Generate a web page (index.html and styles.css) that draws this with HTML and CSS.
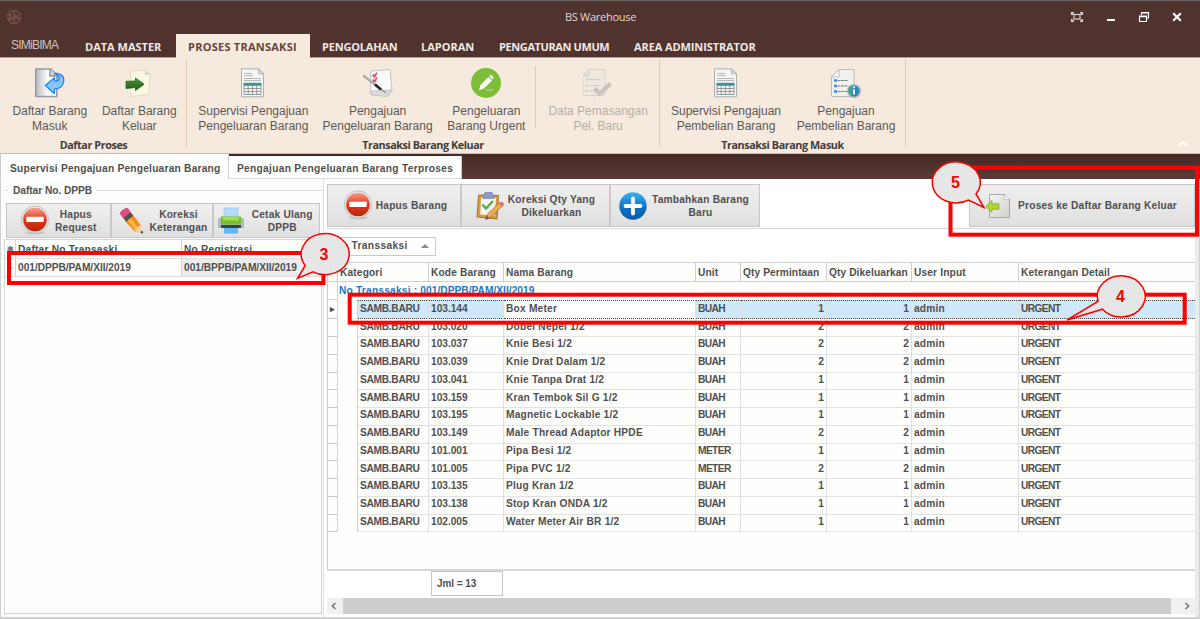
FILE: index.html
```html
<!DOCTYPE html>
<html lang="id">
<head>
<meta charset="utf-8">
<title>BS Warehouse</title>
<link rel="stylesheet" href="styles.css">
</head>
<body>
<svg class="defs" width="0" height="0">
  <defs>
    <linearGradient id="paper" x1="0" y1="0" x2="1" y2="1"><stop offset="0" stop-color="#f4f4f3"/><stop offset="1" stop-color="#cfcfcd"/></linearGradient>
    <linearGradient id="steel" x1="0" y1="0" x2="1" y2="0"><stop offset="0" stop-color="#b9bdc4"/><stop offset=".6" stop-color="#fff"/></linearGradient>
    <linearGradient id="red" x1="0" y1="0" x2="0" y2="1"><stop offset="0" stop-color="#f9a08c"/><stop offset=".5" stop-color="#dd3a1c"/><stop offset="1" stop-color="#ba2408"/></linearGradient>
    <linearGradient id="blue" x1="0" y1="0" x2="0" y2="1"><stop offset="0" stop-color="#3cb4ee"/><stop offset=".55" stop-color="#0b73c4"/><stop offset="1" stop-color="#0a58a4"/></linearGradient>
    <linearGradient id="grn" x1="0" y1="0" x2="0" y2="1"><stop offset="0" stop-color="#4c9a38"/><stop offset="1" stop-color="#1e5c1c"/></linearGradient>
    <symbol id="i-table" viewBox="0 0 30 30">
      <path d="M3.500.8h17l5 5v23h-22z" fill="#f3f4f3" stroke="#aaaead"/>
      <path d="M20.500.8v5h5z" fill="#d5d8d7" stroke="#aaaead" stroke-width=".8"/>
      <path d="M6 5.500h8M6 7.500h9M6 10.500h17M6 12.500h17" stroke="#b4b8b8"/>
      <path d="M6 17.500v9h17v-9M6 20.500h17M6 23.500h17M10.200 17.500v9M14.500 17.500v9M18.700 17.500v9" fill="none" stroke="#8b9292" stroke-width=".9"/>
      <path d="M5.500 14.800h18v3h-18z" fill="#3c9499"/>
    </symbol>
    <symbol id="i-stop" viewBox="0 0 30 32">
      <ellipse cx="15" cy="28.500" rx="10" ry="1.800" fill="#aaa" opacity=".5"/>
      <circle cx="15" cy="15" r="14" fill="#e9e9e9" stroke="#bdbdbd"/>
      <circle cx="15" cy="15" r="12.200" fill="url(#red)"/>
      <rect x="6" y="12" width="18" height="5.600" rx=".8" fill="#fff"/>
    </symbol>
  </defs>
</svg>
<div class="window">
  <header class="titlebar">
    <svg class="logo" width="16" height="16" viewBox="0 0 16 16" fill="none" stroke="#80594f" stroke-width="1.200"><circle cx="8" cy="8" r="6.500" stroke-dasharray="9 1.200"/><path d="M8 1v14M6 5.500H3.500v5H6V8H4.500M10 5.500v5M10 8h2.500v2.500M12.500 5.500v1M8 8h2"/></svg>
    <span class="app-name">BS Warehouse</span>
    <div class="win-btns">
      <svg width="14" height="12" viewBox="0 0 14 12" fill="none" stroke="#d9cfcb" stroke-width="1.200"><rect x="4" y="3.500" width="6" height="4.500"/><path d="M1.500 4V1.500H4M10 1.500h2.500V4M1.500 8v2.500H4M12.500 8v2.500H10M1.500 1.500l2 2M12.500 1.500l-2 2M1.500 10.500l2-2M12.500 10.500l-2-2"/></svg>
      <svg width="10" height="12" viewBox="0 0 10 12"><path d="M1 9h8" stroke="#fff" stroke-width="2"/></svg>
      <svg width="12" height="12" viewBox="0 0 12 12" fill="none" stroke="#fff" stroke-width="1.200"><path d="M3.500 4V1.500h7V7H8.500M3 2h8"/><path d="M1.500 5h7v5.500h-7zM1 5.600h8"/></svg>
      <svg width="10" height="12" viewBox="0 0 10 12"><path d="M1.200 2.200l7.600 7.600M8.800 2.200L1.200 9.800" stroke="#fff" stroke-width="2.200"/></svg>
    </div>
  </header>
  <nav class="menu">
    <span class="m-app">SIMiBIMA</span>
    <span class="m m1">DATA MASTER</span>
    <span class="m m2 active">PROSES TRANSAKSI</span>
    <span class="m m3">PENGOLAHAN</span>
    <span class="m m4">LAPORAN</span>
    <span class="m m5">PENGATURAN UMUM</span>
    <span class="m m6">AREA ADMINISTRATOR</span>
  </nav>
  <section class="ribbon">
    <div class="group g1">
      <div class="btns">
        <div class="rb w89"><svg width="30" height="30" viewBox="0 0 30 30"><path d="M.8 1h15l6 6v21.500H.8z" fill="url(#steel)" stroke="#989ba1" stroke-width="1.600"/><path d="M15 1v7h7" fill="#d8dade" stroke="#8d9097" stroke-width="1.400"/><path d="M19.500 5.500c5-.8 9.500 2 9.300 7-.2 5.200-4 8.300-9.300 8.400l-.3 4.700-8.700-8.200 9-7.700v3.400c2.600.1 4.700-.6 4.500-3.100-.2-2.200-2-3.600-4.500-4.500z" fill="#86c8fc" stroke="#2b84ee" stroke-width="1.400" stroke-linejoin="round"/></svg><span>Daftar Barang<br>Masuk</span></div>
        <div class="rb w89"><svg width="30" height="30" viewBox="0 0 30 30"><path d="M6.500 3l14.500-1 5 4.500-1 20-18 2z" fill="#fbf9e1" stroke="#d9d6bd" stroke-width=".8"/><path d="M21 2l-.3 5 5.300-.5z" fill="#d0d3d0"/><path d="M2 13.300l9.500-.3V10l8.500 6.200-8.500 6.300V19.600l-9.500.8z" fill="url(#grn)" stroke="#215b20" stroke-width=".8"/></svg><span>Daftar Barang<br>Keluar</span></div>
      </div>
      <div class="caption">Daftar Proses</div>
    </div>
    <div class="group g2">
      <div class="btns">
        <div class="rb w125"><svg width="30" height="30"><use href="#i-table"/></svg><span>Supervisi Pengajuan<br>Pengeluaran Barang</span></div>
        <div class="rb w124"><svg width="30" height="30" viewBox="0 0 30 30"><path d="M8 3l19-1.500L29 22l-3 5-19-1z" fill="#fafaf9" stroke="#bbb" stroke-width=".9"/><path d="M8 23l1 4 15 1.500L29 22z" fill="#ddd" stroke="#b5b5b5" stroke-width=".7"/><path d="M10 6h3v3h-3zM10 11h3v3h-3z" fill="#fff" stroke="#dba0a5"/><path d="M10 7l1.500 1.500L14 4.500M10 12l1.500 1.500L14 9.500" fill="none" stroke="#c83645" stroke-width="1.100"/><path d="M.5 7.500L14 18" stroke="#888" stroke-width="2.200"/><path d="M1.500 8L14 17.500" stroke="#ddd" stroke-width=".9"/><path d="M12 16.500l6 5" stroke="#222" stroke-width="2.600"/><path d="M18 21l5 4" stroke="#666"/></svg><span>Pengajuan<br>Pengeluaran Barang</span></div>
        <div class="rb w94"><svg width="30" height="30" viewBox="0 0 30 30"><circle cx="15" cy="15" r="15" fill="#7dbd37"/><path d="M8 22.200l1.400-5.200L17.500 9l3.500 3.500-8 8z" fill="#fff"/><path d="M18.300 8.200l1-1c1-.8 3.800 2 3 3.200l-1 1z" fill="#fff"/><path d="M15 22h7" stroke="#c7e4a4" stroke-width=".8"/></svg><span>Pengeluaran<br>Barang Urgent</span></div>
        <i class="vsep"></i>
        <div class="rb w122 off"><svg width="30" height="30" viewBox="0 0 30 30"><path d="M6 1.500h16v26H0V8z" fill="#efe8df" stroke="#d8d3cb"/><path d="M6 1.500V8H0z" fill="#e5dfd7" stroke="#d8d3cb"/><path d="M6 11.500h11M6 17.500h11M6 23h7" stroke="#c8c5c0" stroke-width="1.200" stroke-dasharray="3 .6"/><path d="M3 11.500h1.500M3 17.500h1.500M3 23h1.500" stroke="#c4c1bd" stroke-width="2"/><path d="M10 22l3-3 4 3.500L26 14l3 3-12.500 12z" fill="#c9c5be"/></svg><span>Data Pemasangan<br>Pel. Baru</span></div>
      </div>
      <div class="caption">Transaksi Barang Keluar</div>
    </div>
    <div class="group g3">
      <div class="btns">
        <div class="rb w124"><svg width="30" height="30"><use href="#i-table"/></svg><span>Supervisi Pengajuan<br>Pembelian Barang</span></div>
        <div class="rb w116"><svg width="30" height="30" viewBox="0 0 30 30"><path d="M8 1.500h15v27H.5V9z" fill="#f1f2f0" stroke="#b9bbb8"/><path d="M8 1.500V9H.5z" fill="#fff" stroke="#b9bbb8"/><path d="M6.500 12.500h10M6.500 18h10M6.500 23.500h10" stroke="#7c7f80" stroke-width="1.200" stroke-dasharray="3 .5"/><path d="M3 12.500h3M3 18h3M3 23.500h3" stroke="#4a86d8" stroke-width="2.400"/><circle cx="23" cy="23" r="6.300" fill="#2e86c4" stroke="#b2b9b6" stroke-width="1.600"/><path d="M17.500 20a6 6 0 0 1 4-2.500l-1 10a6 6 0 0 1-3-7.500" fill="#4aa58b"/><path d="M23 21.500v5M23 18.500v1.800" stroke="#fff" stroke-width="1.900"/></svg><span>Pengajuan<br>Pembelian Barang</span></div>
      </div>
      <div class="caption">Transaksi Barang Masuk</div>
    </div>
    <svg class="collapse" width="10" height="7" viewBox="0 0 10 7"><path d="M1 6l4-4 4 4" fill="none" stroke="#fff" stroke-width="2"/></svg>
  </section>
  <div class="doc-tabs">
    <span class="dt on">Supervisi Pengajuan Pengeluaran Barang</span>
    <span class="dt second">Pengajuan Pengeluaran Barang Terproses</span>
  </div>
  <main class="body">
    <aside class="left">
      <div class="legend"><i></i><span>Daftar No. DPPB</span><b></b></div>
      <div class="tools small">
        <div class="tb t1"><svg width="30" height="31"><use href="#i-stop"/></svg><span>Hapus<br>Request</span></div>
        <div class="tb t2"><svg width="26" height="28" viewBox="0 0 26 28"><path d="M1 6.500Q3 2 8.500 1l3.500 5.500-7 5.500z" fill="#e94a87" stroke="#aa2c5c" stroke-width=".5"/><path d="M4.500 11l7-6 3 4-7 6.500z" fill="#55534a"/><path d="M7 15l7.500-6.500L22 18.500l.5 4L16 25z" fill="#f38b20"/><path d="M9 13.500l8 10.500 3.500-2L11.500 11z" fill="#fdb440"/><path d="M15 23.500l7-6 2 9z" fill="#f4d19c"/><path d="M21.300 25.500l2-2 .9 3.300z" fill="#333"/></svg><span>Koreksi<br>Keterangan</span></div>
        <div class="tb t3"><svg width="28" height="28" viewBox="0 0 28 28"><path d="M7 1h14v12H7z" fill="#b5dbfb" stroke="#8abce6" stroke-width=".6"/><path d="M2 11h3v4h18v-4h3q1 0 1 2v8H1v-8q0-2 1-2z" fill="#b3b9bb"/><path d="M4 9.500h20v8H4z" fill="#71c129"/><path d="M6 10h16v3.500H6z" fill="#a2de50"/><path d="M4 18h20v3H4z" fill="#36444f"/><path d="M7 21h14v5.500H7z" fill="#65b5f3"/></svg><span>Cetak Ulang<br>DPPB</span></div>
      </div>
      <div class="lgrid">
        <div class="lr lh"><span class="ind">✱</span><span class="a">Daftar No Transaski</span><span class="b">No Registrasi</span></div>
        <div class="lr"><span class="ind">▸</span><span class="a code">001/DPPB/PAM/XII/2019</span><span class="b code sel">001/BPPB/PAM/XII/2019</span></div>
      </div>
    </aside>
    <section class="right">
      <div class="toolrow">
        <div class="tools">
          <div class="tb r1"><svg width="30" height="31"><use href="#i-stop"/></svg><span>Hapus Barang</span></div>
          <div class="tb r2"><svg width="29" height="30" viewBox="0 0 29 30"><path d="M2.500 4l20 .5L21 28 1 26z" fill="#d59c48" stroke="#a57429"/><path d="M5 6.500l15 .5-1.200 17.500-14.500-1z" fill="#f5f7fd"/><path d="M7 5l2-3.500h7L18 5v2.500H7z" fill="#8c9cc8" stroke="#6677a8" stroke-width=".6"/><path d="M6.500 13.500l3.500 4L17 10" fill="none" stroke="#58ad36" stroke-width="2.400"/><path d="M9.500 28.500l2-5.500L23 12l3.500 3L15 26z" fill="#f0aa50" stroke="#9a6632" stroke-width=".7"/><path d="M22.500 12.500l2-1.800q3.500.2 3.500 3.300l-2 1.800z" fill="#d8716a"/><path d="M9.500 28.500l1.400-3.500 2.400 2z" fill="#644"/></svg><span>Koreksi Qty Yang<br>Dikeluarkan</span></div>
          <div class="tb r3"><svg width="28" height="28" viewBox="0 0 28 28"><circle cx="14" cy="14" r="13.700" fill="url(#blue)"/><path d="M14 6.500v15M6.500 14h15" stroke="#fff" stroke-width="3.800" stroke-linecap="round"/></svg><span>Tambahkan Barang<br>Baru</span></div>
        </div>
        <div class="tools proses">
          <div class="tb r4"><svg width="26" height="26" viewBox="0 0 26 26"><path d="M4.500 1.500h15l5 5v18h-20z" fill="url(#paper)" stroke="#a9a9a9"/><path d="M19.500 1.500v5h5z" fill="#fff" stroke="#b5b5b5" stroke-width=".7"/><path d="M.5 13.500L7 7.500v3.300h7v5.400H7v3.300z" fill="#afd532" stroke="#8bb11c" stroke-width=".8"/></svg><span>Proses ke Daftar Barang Keluar</span></div>
        </div>
      </div>
      <div class="groupby"><span class="chip"><span>No Transsaksi</span><svg width="8" height="4" viewBox="0 0 8 4"><path d="M0 4l4-4 4 4z" fill="#888"/></svg></span></div>
      <div class="grid">
        <div class="gh"><span class="c0"></span><span class="ck">Kategori</span><span>Kode Barang</span><span>Nama Barang</span><span>Unit</span><span class="q">Qty Permintaan</span><span class="q">Qty Dikeluarkan</span><span>User Input</span><span>Keterangan Detail</span></div>
        <div class="gg"><span class="c0"></span><span>No Transsaksi : <em>001/DPPB/PAM/XII/2019</em></span></div>
        <div class="gr pick"><i>▸</i><i></i><span>SAMB.BARU</span><span>103.144</span><span>Box Meter</span><span>BUAH</span><span>1</span><span>1</span><span>admin</span><span>URGENT</span></div>
        <div class="gr"><i></i><i></i><span>SAMB.BARU</span><span>103.020</span><span>Dobel Nepel 1/2</span><span>BUAH</span><span>2</span><span>2</span><span>admin</span><span>URGENT</span></div>
        <div class="gr"><i></i><i></i><span>SAMB.BARU</span><span>103.037</span><span>Knie Besi 1/2</span><span>BUAH</span><span>2</span><span>2</span><span>admin</span><span>URGENT</span></div>
        <div class="gr"><i></i><i></i><span>SAMB.BARU</span><span>103.039</span><span>Knie Drat Dalam 1/2</span><span>BUAH</span><span>2</span><span>2</span><span>admin</span><span>URGENT</span></div>
        <div class="gr"><i></i><i></i><span>SAMB.BARU</span><span>103.041</span><span>Knie Tanpa Drat 1/2</span><span>BUAH</span><span>1</span><span>1</span><span>admin</span><span>URGENT</span></div>
        <div class="gr"><i></i><i></i><span>SAMB.BARU</span><span>103.159</span><span>Kran Tembok Sil G 1/2</span><span>BUAH</span><span>1</span><span>1</span><span>admin</span><span>URGENT</span></div>
        <div class="gr"><i></i><i></i><span>SAMB.BARU</span><span>103.195</span><span>Magnetic Lockable 1/2</span><span>BUAH</span><span>1</span><span>1</span><span>admin</span><span>URGENT</span></div>
        <div class="gr"><i></i><i></i><span>SAMB.BARU</span><span>103.149</span><span>Male Thread Adaptor HPDE</span><span>BUAH</span><span>2</span><span>2</span><span>admin</span><span>URGENT</span></div>
        <div class="gr"><i></i><i></i><span>SAMB.BARU</span><span>101.001</span><span>Pipa Besi 1/2</span><span>METER</span><span>1</span><span>1</span><span>admin</span><span>URGENT</span></div>
        <div class="gr"><i></i><i></i><span>SAMB.BARU</span><span>101.005</span><span>Pipa PVC 1/2</span><span>METER</span><span>2</span><span>2</span><span>admin</span><span>URGENT</span></div>
        <div class="gr"><i></i><i></i><span>SAMB.BARU</span><span>103.135</span><span>Plug Kran 1/2</span><span>BUAH</span><span>1</span><span>1</span><span>admin</span><span>URGENT</span></div>
        <div class="gr"><i></i><i></i><span>SAMB.BARU</span><span>103.138</span><span>Stop Kran ONDA 1/2</span><span>BUAH</span><span>1</span><span>1</span><span>admin</span><span>URGENT</span></div>
        <div class="gr"><i></i><i></i><span>SAMB.BARU</span><span>102.005</span><span>Water Meter Air BR 1/2</span><span>BUAH</span><span>1</span><span>1</span><span>admin</span><span>URGENT</span></div>
      </div>
      <div class="summary"><span>Jml = 13</span></div>
      <div class="scroll">
        <svg width="16" height="16" viewBox="0 0 16 16"><path d="M8.500 5L5.300 8l3.200 3" fill="none" stroke="#777" stroke-width="1.600"/></svg>
        <div class="thumb"></div>
        <svg class="sr" width="24" height="16" viewBox="0 0 24 16"><path d="M14.500 5l3.200 3-3.200 3" fill="none" stroke="#777" stroke-width="1.600"/></svg>
      </div>
    </section>
  </main>
  <svg class="callouts" width="1200" height="619" viewBox="0 0 1200 619">
    <g fill="none" stroke="#f00" stroke-width="4">
      <rect x="9" y="253" width="314.500" height="30"/>
      <rect x="349.700" y="294.700" width="835" height="28"/>
      <rect x="950.500" y="167.700" width="246.500" height="67"/>
    </g>
    <g fill="#e6e6e6" stroke="#f00" stroke-width="1.500" stroke-linejoin="miter">
      <path d="M305.200 265.500A24 20.500 0 1 1 313 271.800L297.500 278.500Z"/>
      <path d="M1098 301.500A24 20.500 0 1 1 1102.500 309.200L1067 320Z"/>
      <path d="M976 194A24 20.500 0 1 0 968.500 200L984 207.500Z"/>
    </g>
    <g class="nums"><text x="324" y="259.500">3</text><text x="1120.500" y="301.500">4</text><text x="955.500" y="188">5</text></g>
  </svg>
</div>
</body>
</html>
```
FILE: styles.css
```css
* { box-sizing: border-box; }
body { margin: 0; background: #fff; font: bold 10.2px/12px "Liberation Sans", Arial, sans-serif; color: #505050; letter-spacing: .2px; }
.defs { position: absolute; }
.window { position: relative; width: 1200px; height: 619px; overflow: hidden; display: flex; flex-direction: column; background: #e9e9e8; }
svg { display: block; flex: none; }
i, em { font-style: normal; }

.titlebar { flex: none; height: 33px; border-top: 1.500px solid #686462; background: #50322e; display: flex; align-items: center; justify-content: space-between; padding: 0 18px 0 6px; }
.app-name { font: 11px/14px "Open Sans", "Noto Sans", sans-serif; color: #e0d6d2; letter-spacing: -.27px; margin-left: 109px; }
.win-btns { display: flex; gap: 22px; align-items: center; }

.menu { flex: none; height: 25px; background: #50322e; border-bottom: 1px solid #c39a87; display: flex; align-items: stretch; }
.m-app { font: 12px/25px "Liberation Sans", sans-serif; color: #cfc2be; letter-spacing: -.75px; width: 73px; padding-left: 11px; margin-bottom: -1px; }
.m { font: bold 11px/28px "Open Sans", sans-serif; letter-spacing: 0; color: #efe9e6; white-space: nowrap; padding-left: 12px; }
.m1 { width: 103px; }
.m2 { width: 134px; letter-spacing: .25px; }
.m3 { width: 99px; letter-spacing: -.2px; }
.m4 { width: 78px; }
.m5 { width: 135px; letter-spacing: -.4px; }
.m6 { letter-spacing: -.1px; }
.active { background: #f5eadd; color: #66443c; margin: 1px 0 -1px; line-height: 26px; }

.ribbon { flex: none; height: 96px; background: #f5eadd; border-bottom: 1.500px solid #d9b5a3; display: flex; position: relative; color: #5e5856; }
.group { display: flex; flex-direction: column; padding-top: 9px; border-right: 1px solid #e8c8b4; height: 88px; margin-top: 1px; }
.g1 { width: 187px; padding-left: 5px; }
.g2 { width: 473px; padding-left: 4px; }
.g3 { width: 246px; padding-left: 4px; }
.btns { display: flex; flex: none; height: 70px; }
.rb { display: flex; flex-direction: column; align-items: center; gap: 6px; text-align: center; font: 12px/15px "Liberation Sans", sans-serif; letter-spacing: 0; white-space: nowrap; }
.w89 { width: 89.500px; }
.w94 { width: 94px; }
.w116 { width: 116px; }
.w122 { width: 122px; }
.w124 { width: 124px; }
.w125 { width: 125px; }
.off { color: #b5aea8; }
.vsep { width: 1px; height: 62px; margin: -2px 1px 0 2px; background: #e8c8b4; }
.caption { flex: none; font: bold 10.800px/14px "Open Sans", sans-serif; letter-spacing: -.42px; text-align: center; color: #413b39; padding-right: 4px; }
.collapse { margin: 82px 0 0 272px; }

.doc-tabs { flex: none; height: 25px; display: flex; align-items: flex-end; background: linear-gradient(#452925, #5a3b37); white-space: nowrap; }
.dt { background: #fff; height: 23px; line-height: 25px; padding-left: 8px; width: 233px; border-right: 1px solid #ccc; border-bottom: 1px solid #ddd; letter-spacing: .3px; }
.dt.on { width: 229px; height: 25px; padding-left: 9px; line-height: 29px; border-left: 1px solid #ccc; border-bottom: 0; letter-spacing: .22px; }

.body { flex: 1; display: flex; background: #fff; border: 1px solid #d0d0cf; border-width: 0 1px 2px; min-height: 0; }
.left { width: 323px; padding: 5px 0 3px 3px; display: flex; flex-direction: column; border-right: 1px solid #e0e0e0; background: #fdfdfd; }
.legend { display: flex; align-items: center; height: 13px; letter-spacing: -.05px; }
.legend i { width: 4px; height: 1px; background: #ddd; }
.legend span { margin: 0 4px 0 5px; }
.legend b { flex: 1; height: 1px; background: #ddd; }
.tools { display: flex; border: 1px solid #c6c6c6; background: linear-gradient(#f0f0ef, #dfdfdf); height: 43px; }
.tb { display: flex; align-items: center; text-align: center; line-height: 13px; border-right: 2px solid #c8c8c8; white-space: nowrap; }
.tb:last-child { border-right: 0; }
.tb span { flex: 1; }
.small { height: 35px; width: 314px; margin: 6px 0 0 2px; }
.t1 { width: 105px; padding-left: 13px; }
.t1 span { padding-right: 8px; }
.t2 { width: 103px; padding-left: 7px; }
.t3 { width: 105px; padding-left: 3px; }
.lgrid { flex: 1; border: 1px solid #d3d3d3; width: 318px; margin-top: 1px; background: #fefefd; }
.lr { display: flex; height: 18px; line-height: 18px; border-bottom: 1px solid #ddd; white-space: nowrap; }
.lr span { border-right: 1px solid #d4d4d4; }
.lh { height: 19px; line-height: 20px; }
.lr .ind { width: 11px; font-size: 8px; color: #777; text-align: center; letter-spacing: 0; }
.lr .a { width: 166px; padding-left: 2px; }
.lr .b { width: 139px; padding-left: 2px; border: 0; }
.lr .code { letter-spacing: -.04px; }
.lr .sel { background: #ececec; }

.right { flex: 1; padding: 5px 0 3px 3px; display: flex; flex-direction: column; min-width: 0; border-right: 4px solid #ebebeb; }
.toolrow { display: flex; justify-content: space-between; height: 45px; border-bottom: 1px solid #d8d8d8; }
.r1 { width: 134px; padding-left: 15px; }
.r1 span { padding-right: 10px; }
.r2 { width: 149px; padding-left: 14px; }
.r2 span { padding-right: 11px; }
.r3 { width: 148px; padding-left: 8px; }
.r3 span { padding-right: 5px; }
.proses { width: 226px; }
.r4 { padding-left: 15px; width: 224px; }
.r4 span { padding-right: 10px; }
.groupby { height: 33px; padding: 8px 0 0 7px; }
.chip { display: flex; width: 102px; height: 19px; border: 1px solid #c8c8c8; align-items: center; justify-content: space-between; padding: 0 6px 0 0; background: #fff; letter-spacing: .36px; }
.chip span { margin-left: -1px; }
.grid { height: 308px; border-left: 1px solid #ccc; background: #fefefd; }
.gh { display: grid; grid-template-columns: 10px 91px 75px 192px 45px 86px 85px 107px 1fr; height: 20px; line-height: 19px; border: 1px solid #cfcfcf; border-width: 1px 0; white-space: nowrap; letter-spacing: .14px; }
.gh span { padding-left: 2px; border-right: 1px solid #cfcfcf; }
.gh span:last-child { border-right: 0; }
.gh .q { letter-spacing: .08px; }
.gg { display: flex; height: 18px; line-height: 17px; color: #1b79c9; }
.gg .c0 { width: 10px; border-right: 1px solid #d4d4d4; border-bottom: 1px solid #d4d4d4; margin-right: 1px; }
.gg em { letter-spacing: .02px; }
.gr { display: grid; grid-template-columns: 10px 20px 71px 75px 192px 45px 86px 85px 107px 1fr; height: 17.750px; line-height: 18.500px; white-space: nowrap; }
.gr i { border-right: 1px solid #d4d4d4; font-size: 9px; letter-spacing: 0; text-align: center; }
.gr i:first-child { border-bottom: 1px solid #c8c8c8; }
.gr span { padding-left: 2px; border-right: 1px solid #dfdfdf; border-bottom: 1px solid #e2e2e2; }
.gr span:last-child { border-right: 0; }
.gr span:nth-child(3) { letter-spacing: -.3px; }
.gr span:nth-child(4) { letter-spacing: -.03px; }
.gr span:nth-child(6), .gr span:nth-child(10) { letter-spacing: -.6px; }
.gr span:nth-child(7), .gr span:nth-child(8) { text-align: right; padding-right: 2px; letter-spacing: 0; }
.pick span { background: #cee8f9; border-top: 1px dotted #444; border-bottom: 1px dotted #444; line-height: 16.500px; }
.pick span:nth-child(5) { background: #fff; }
.summary { height: 30px; border-top: 2px solid #d6d6d6; padding: 0 0 0 104px; }
.summary span { display: block; width: 72px; height: 25px; border: 1px solid #c5c5c5; line-height: 24px; padding-left: 5px; letter-spacing: -.05px; font-size: 10px; }
.scroll { display: flex; height: 16px; background: #f0f0f0; margin-top: -1px; }
.thumb { flex: 1; background: #cdcdcc; }

.callouts { position: absolute; left: 0; top: 0; }
.nums { font: bold 16px "Liberation Sans", sans-serif; fill: #f00; letter-spacing: 0; text-anchor: middle; }
```
